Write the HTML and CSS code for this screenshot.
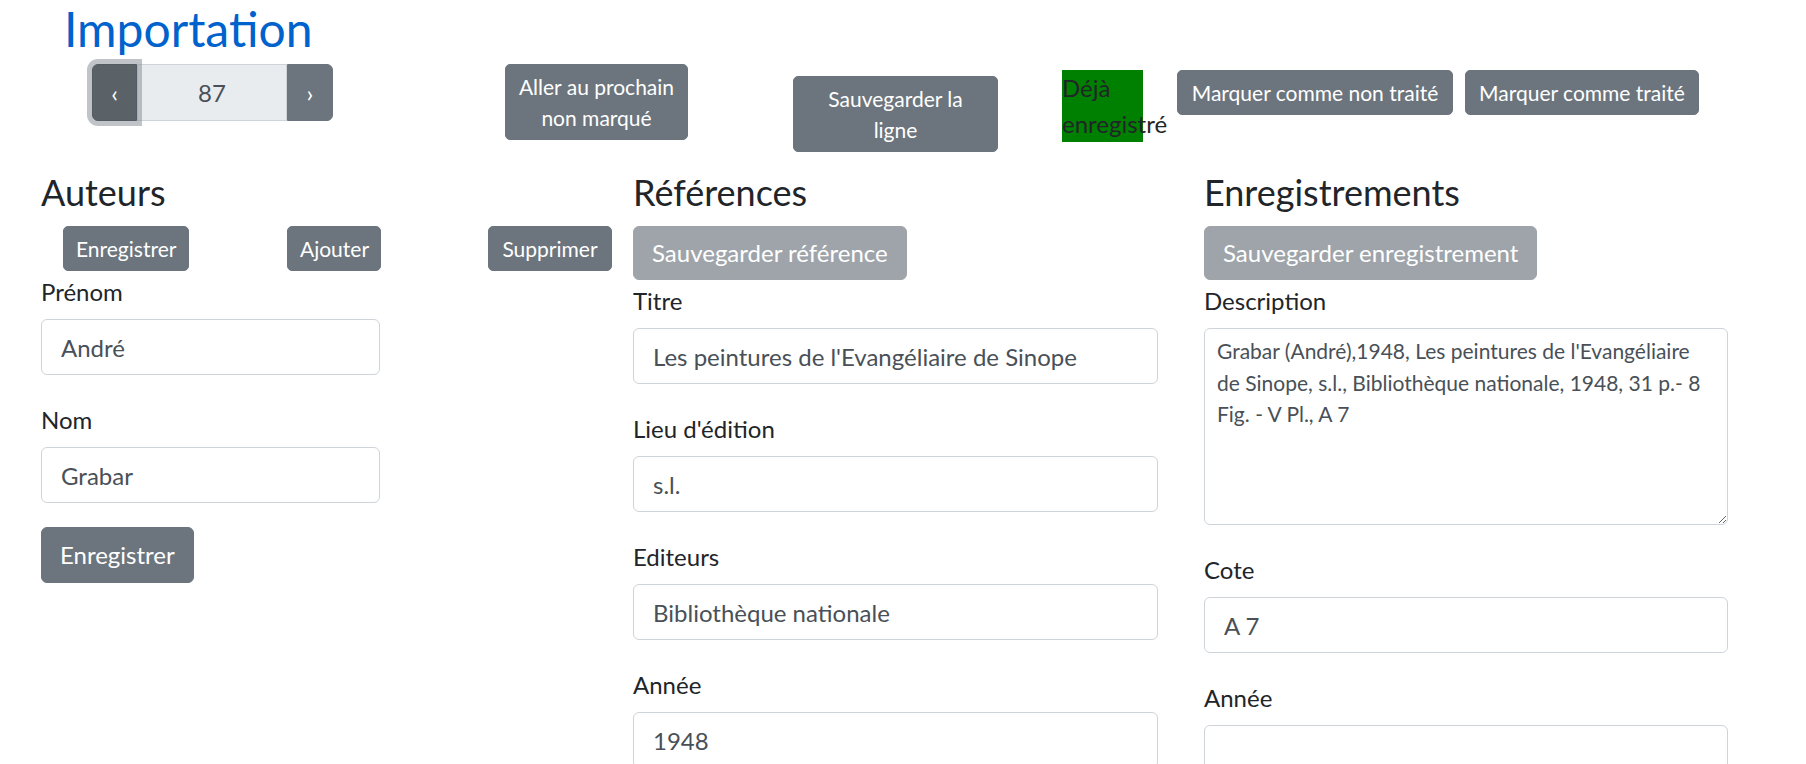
FILE: index.html
```html
<!DOCTYPE html>
<html lang="fr">
<head>
<meta charset="utf-8">
<title>Importation</title>
<link rel="stylesheet" href="styles.css">
</head>
<body>
<h2 class="title">Importation</h2>
<div class="toolbar">
  <div class="pager">
    <button class="pager-btn pager-prev">&lsaquo;</button>
    <input class="pager-input" type="text" value="87" readonly>
    <button class="pager-btn pager-next">&rsaquo;</button>
  </div>
  <button class="btn btn-sm btn-next-unmarked">Aller au prochain non marqué</button>
  <button class="btn btn-sm btn-save-line">Sauvegarder la ligne</button>
  <div class="already">Déjà enregistré</div>
  <button class="btn btn-sm btn-mark-untreated">Marquer comme non traité</button>
  <button class="btn btn-sm btn-mark-treated">Marquer comme traité</button>
</div>
<div class="columns">
  <section class="col col-authors">
    <h3 class="heading">Auteurs</h3>
    <div class="author-actions">
      <button class="btn btn-sm act-save">Enregistrer</button>
      <button class="btn btn-sm act-add">Ajouter</button>
      <button class="btn btn-sm act-del">Supprimer</button>
    </div>
    <div class="field">
      <label class="label">Prénom</label>
      <input class="control" type="text" value="André">
    </div>
    <div class="field">
      <label class="label">Nom</label>
      <input class="control" type="text" value="Grabar">
    </div>
    <button class="btn">Enregistrer</button>
  </section>
  <section class="col col-refs">
    <h3 class="heading">Références</h3>
    <button class="btn btn-disabled btn-block-save">Sauvegarder référence</button>
    <div class="field">
      <label class="label">Titre</label>
      <input class="control" type="text" value="Les peintures de l'Evangéliaire de Sinope">
    </div>
    <div class="field">
      <label class="label">Lieu d'édition</label>
      <input class="control" type="text" value="s.l.">
    </div>
    <div class="field">
      <label class="label">Editeurs</label>
      <input class="control" type="text" value="Bibliothèque nationale">
    </div>
    <div class="field">
      <label class="label">Année</label>
      <input class="control" type="text" value="1948">
    </div>
  </section>
  <section class="col col-records">
    <h3 class="heading">Enregistrements</h3>
    <button class="btn btn-disabled btn-block-save">Sauvegarder enregistrement</button>
    <div class="field">
      <label class="label">Description</label>
      <textarea class="control control-sm">Grabar (André),1948, Les peintures de l'Evangéliaire de Sinope, s.l., Bibliothèque nationale, 1948, 31 p.- 8 Fig. - V Pl., A 7</textarea>
    </div>
    <div class="field">
      <label class="label">Cote</label>
      <input class="control" type="text" value="A 7">
    </div>
    <div class="field">
      <label class="label">Année</label>
      <input class="control" type="text" value="">
    </div>
  </section>
</div>
</body>
</html>
```
FILE: styles.css
```css
* { box-sizing: border-box; }

body {
  margin: 0;
  font-family: "Lato", "Noto Sans", sans-serif;
  font-size: 24px;
  line-height: 36px;
  color: #212529;
  background: #fff;
  overflow: hidden;
}

.title {
  margin: 0 0 6px 64px;
  font-size: 48px;
  line-height: 58px;
  font-weight: 400;
  color: #0062cc;
}

.toolbar {
  display: flex;
  align-items: flex-start;
}

.pager {
  display: flex;
  margin-left: 92px;
  height: 57px;
}

.pager-btn {
  width: 45px;
  padding: 0;
  background: #6c757d;
  border: 1px solid #6c757d;
  color: #fff;
  font-family: inherit;
  font-size: 24px;
}

.pager-prev {
  position: relative;
  z-index: 1;
  border-radius: 6px 0 0 6px;
  background: #5a6268;
  border-color: #545b62;
  box-shadow: 0 0 0 5px rgba(130, 138, 145, 0.5);
}

.pager-next {
  width: 46px;
  border-radius: 0 6px 6px 0;
}

.pager-input {
  width: 150px;
  height: 57px;
  border: 1px solid #ced4da;
  background: #e9ecef;
  text-align: center;
  font-family: inherit;
  font-size: 24px;
  color: #495057;
  outline: none;
}

.btn {
  font-family: inherit;
  font-size: 24px;
  line-height: 36px;
  padding: 9px 18px;
  background: #6c757d;
  border: 1px solid #6c757d;
  color: #fff;
  border-radius: 6px;
  text-align: center;
}

.btn-sm {
  font-size: 21px;
  line-height: 31px;
  padding: 6px 12px;
  border-radius: 5px;
}

.btn-disabled {
  opacity: 0.65;
}

.btn-block-save {
  display: block;
  padding: 8px 18px;
}

.btn-next-unmarked {
  width: 183px;
  margin-left: 172px;
}

.btn-save-line {
  width: 205px;
  margin-left: 105px;
  margin-top: 12px;
}

.already {
  width: 81px;
  height: 72px;
  margin-left: 64px;
  margin-top: 6px;
  background: #008000;
}

.btn-mark-untreated {
  width: 276px;
  margin-left: 34px;
  margin-top: 6px;
}

.btn-mark-treated {
  width: 234px;
  margin-left: 12px;
  margin-top: 6px;
}

.columns {
  display: flex;
  align-items: flex-start;
  margin-top: 12px;
}

.col { flex: none; }

.col-authors { margin-left: 41px; width: 592px; }
.col-refs { width: 571px; }
.col-records { width: 524px; }

.heading {
  margin: 6px 0 12px;
  font-size: 36px;
  line-height: 44px;
  font-weight: 400;
}

.author-actions {
  display: flex;
}

.act-save { margin-left: 22px; width: 126px; }
.act-add { margin-left: 98px; width: 94px; }
.act-del { margin-left: 107px; width: 124px; }

.field {
  margin-bottom: 24px;
}

.label {
  display: block;
  padding-top: 3px;
  margin-bottom: 9px;
}

.control {
  display: block;
  width: 100%;
  height: 56px;
  padding: 0 18px 0 19px;
  border: 1px solid #ced4da;
  border-radius: 6px;
  font-family: inherit;
  font-size: 24px;
  color: #495057;
  background: #fff;
}

.col-authors .control { width: 339px; }
.col-refs .control { width: 525px; }

.control-sm {
  height: 197px;
  padding: 6px 12px;
  font-size: 21px;
  line-height: 31.5px;
  resize: vertical;
}
```
